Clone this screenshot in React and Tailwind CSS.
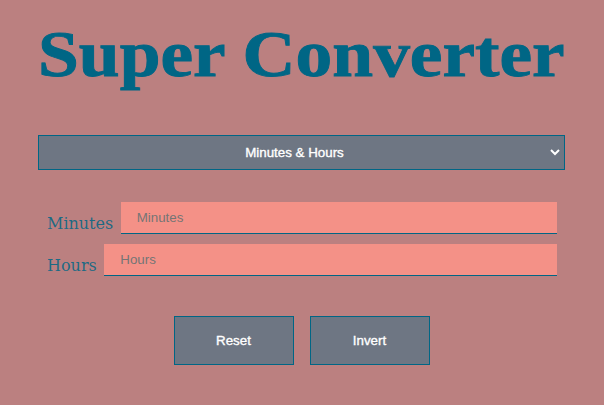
import React from "react";

const FIELDS = ["Minutes", "Hours"];
const ACTIONS = ["Reset", "Invert"];

export default function App() {
  return (
    <main className="h-[405px] w-[604px] overflow-hidden bg-[#bb8080] px-[38px] pt-[14px] font-['Liberation_Sans',Arial,sans-serif] text-[13.333px] text-[#006685]">
      <h1 className="h-[80px] w-[527px] origin-left scale-x-[1.112] whitespace-nowrap font-['Liberation_Serif',serif] text-[66px] leading-[80px] font-bold [-webkit-text-stroke:0.9px_#006685]">
        Super Converter
      </h1>

      <div className="mt-[41px] grid h-[35px] w-[527px] items-center border border-[#006685] bg-[#6e7683]">
        <select className="col-start-1 row-start-1 h-full w-full appearance-none pr-[14px] text-center text-white outline-none [-webkit-text-stroke:0.35px_white]">
          <option>Minutes &amp; Hours</option>
        </select>
        <svg
          className="pointer-events-none col-start-1 row-start-1 mr-1 mb-px size-[10px] justify-self-end text-white"
          viewBox="0 0 10 10"
          fill="none"
          stroke="currentColor"
          strokeWidth="2"
        >
          <path d="M1 3L5 7L9 3" />
        </svg>
      </div>

      <form className="mt-8 flex w-[519px] flex-col gap-[10px] pl-[9px]">
        {FIELDS.map((name) => (
          <label key={name} className="flex h-8 items-start">
            <span className="mr-[7.5px] pt-[11px] font-['DejaVu_Serif',serif] text-[16px] leading-[22px] text-[#006685]/85">
              {name}
            </span>
            <input
              className="h-8 min-w-0 flex-1 rounded-none border-b border-[#006685] bg-[#f49187] px-4 outline-none placeholder:text-[#757575]"
              placeholder={name}
            />
          </label>
        ))}
      </form>

      <div className="mt-10 flex w-[527px] justify-center gap-4">
        {ACTIONS.map((name) => (
          <button
            key={name}
            className="h-[49px] w-[120px] border border-[#006685] bg-[#6e7683] text-white [-webkit-text-stroke:0.35px_white]"
          >
            {name}
          </button>
        ))}
      </div>
    </main>
  );
}
